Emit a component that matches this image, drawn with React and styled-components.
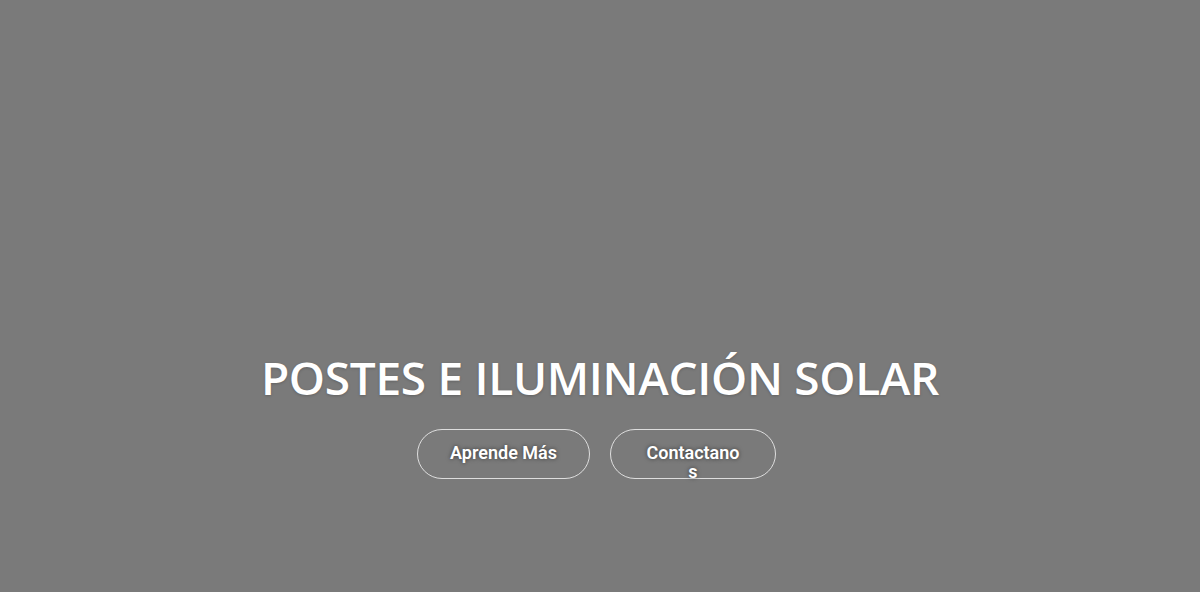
import React from "react";
import styled, { createGlobalStyle } from "styled-components";

const GlobalStyle = createGlobalStyle`
  html, body {
    margin: 0;
    padding: 0;
    background: #7a7a7a;
  }
`;

const Hero = styled.section`
  height: 592px;
  background: #7a7a7a;
  display: flex;
  flex-direction: column;
  align-items: center;
  padding-top: 346px;
  box-sizing: border-box;
`;

const Title = styled.h1`
  margin: 0;
  font-family: "Open Sans", "Noto Sans", sans-serif;
  font-weight: 600;
  font-size: 46px;
  line-height: 62px;
  color: #ffffff;
  text-shadow: 0 1px 3px rgba(0, 0, 0, 0.2);
  letter-spacing: -0.3px;
`;

const Actions = styled.div`
  display: flex;
  gap: 20px;
  margin-top: 21px;
  padding-right: 7px;
`;

const Button = styled.a`
  display: block;
  box-sizing: border-box;
  width: ${({ $width }) => $width}px;
  height: 50px;
  padding: 14px 32px 0;
  border: 1px solid rgba(255, 255, 255, 0.75);
  border-radius: 25px;
  overflow-wrap: anywhere;
  font-family: Roboto, "Liberation Sans", sans-serif;
  font-weight: 600;
  font-size: 18px;
  line-height: 18.5px;
  text-align: center;
  color: #ffffff;
  text-decoration: none;
  text-shadow: 0 0 4px rgba(0, 0, 0, 0.55);
`;

export default function App() {
  return (
    <>
      <GlobalStyle />
      <Hero>
        <Title>POSTES E ILUMINACIÓN SOLAR</Title>
        <Actions>
          <Button href="#" $width={173}>Aprende Más</Button>
          <Button href="#" $width={166}>Contactanos</Button>
        </Actions>
      </Hero>
    </>
  );
}
